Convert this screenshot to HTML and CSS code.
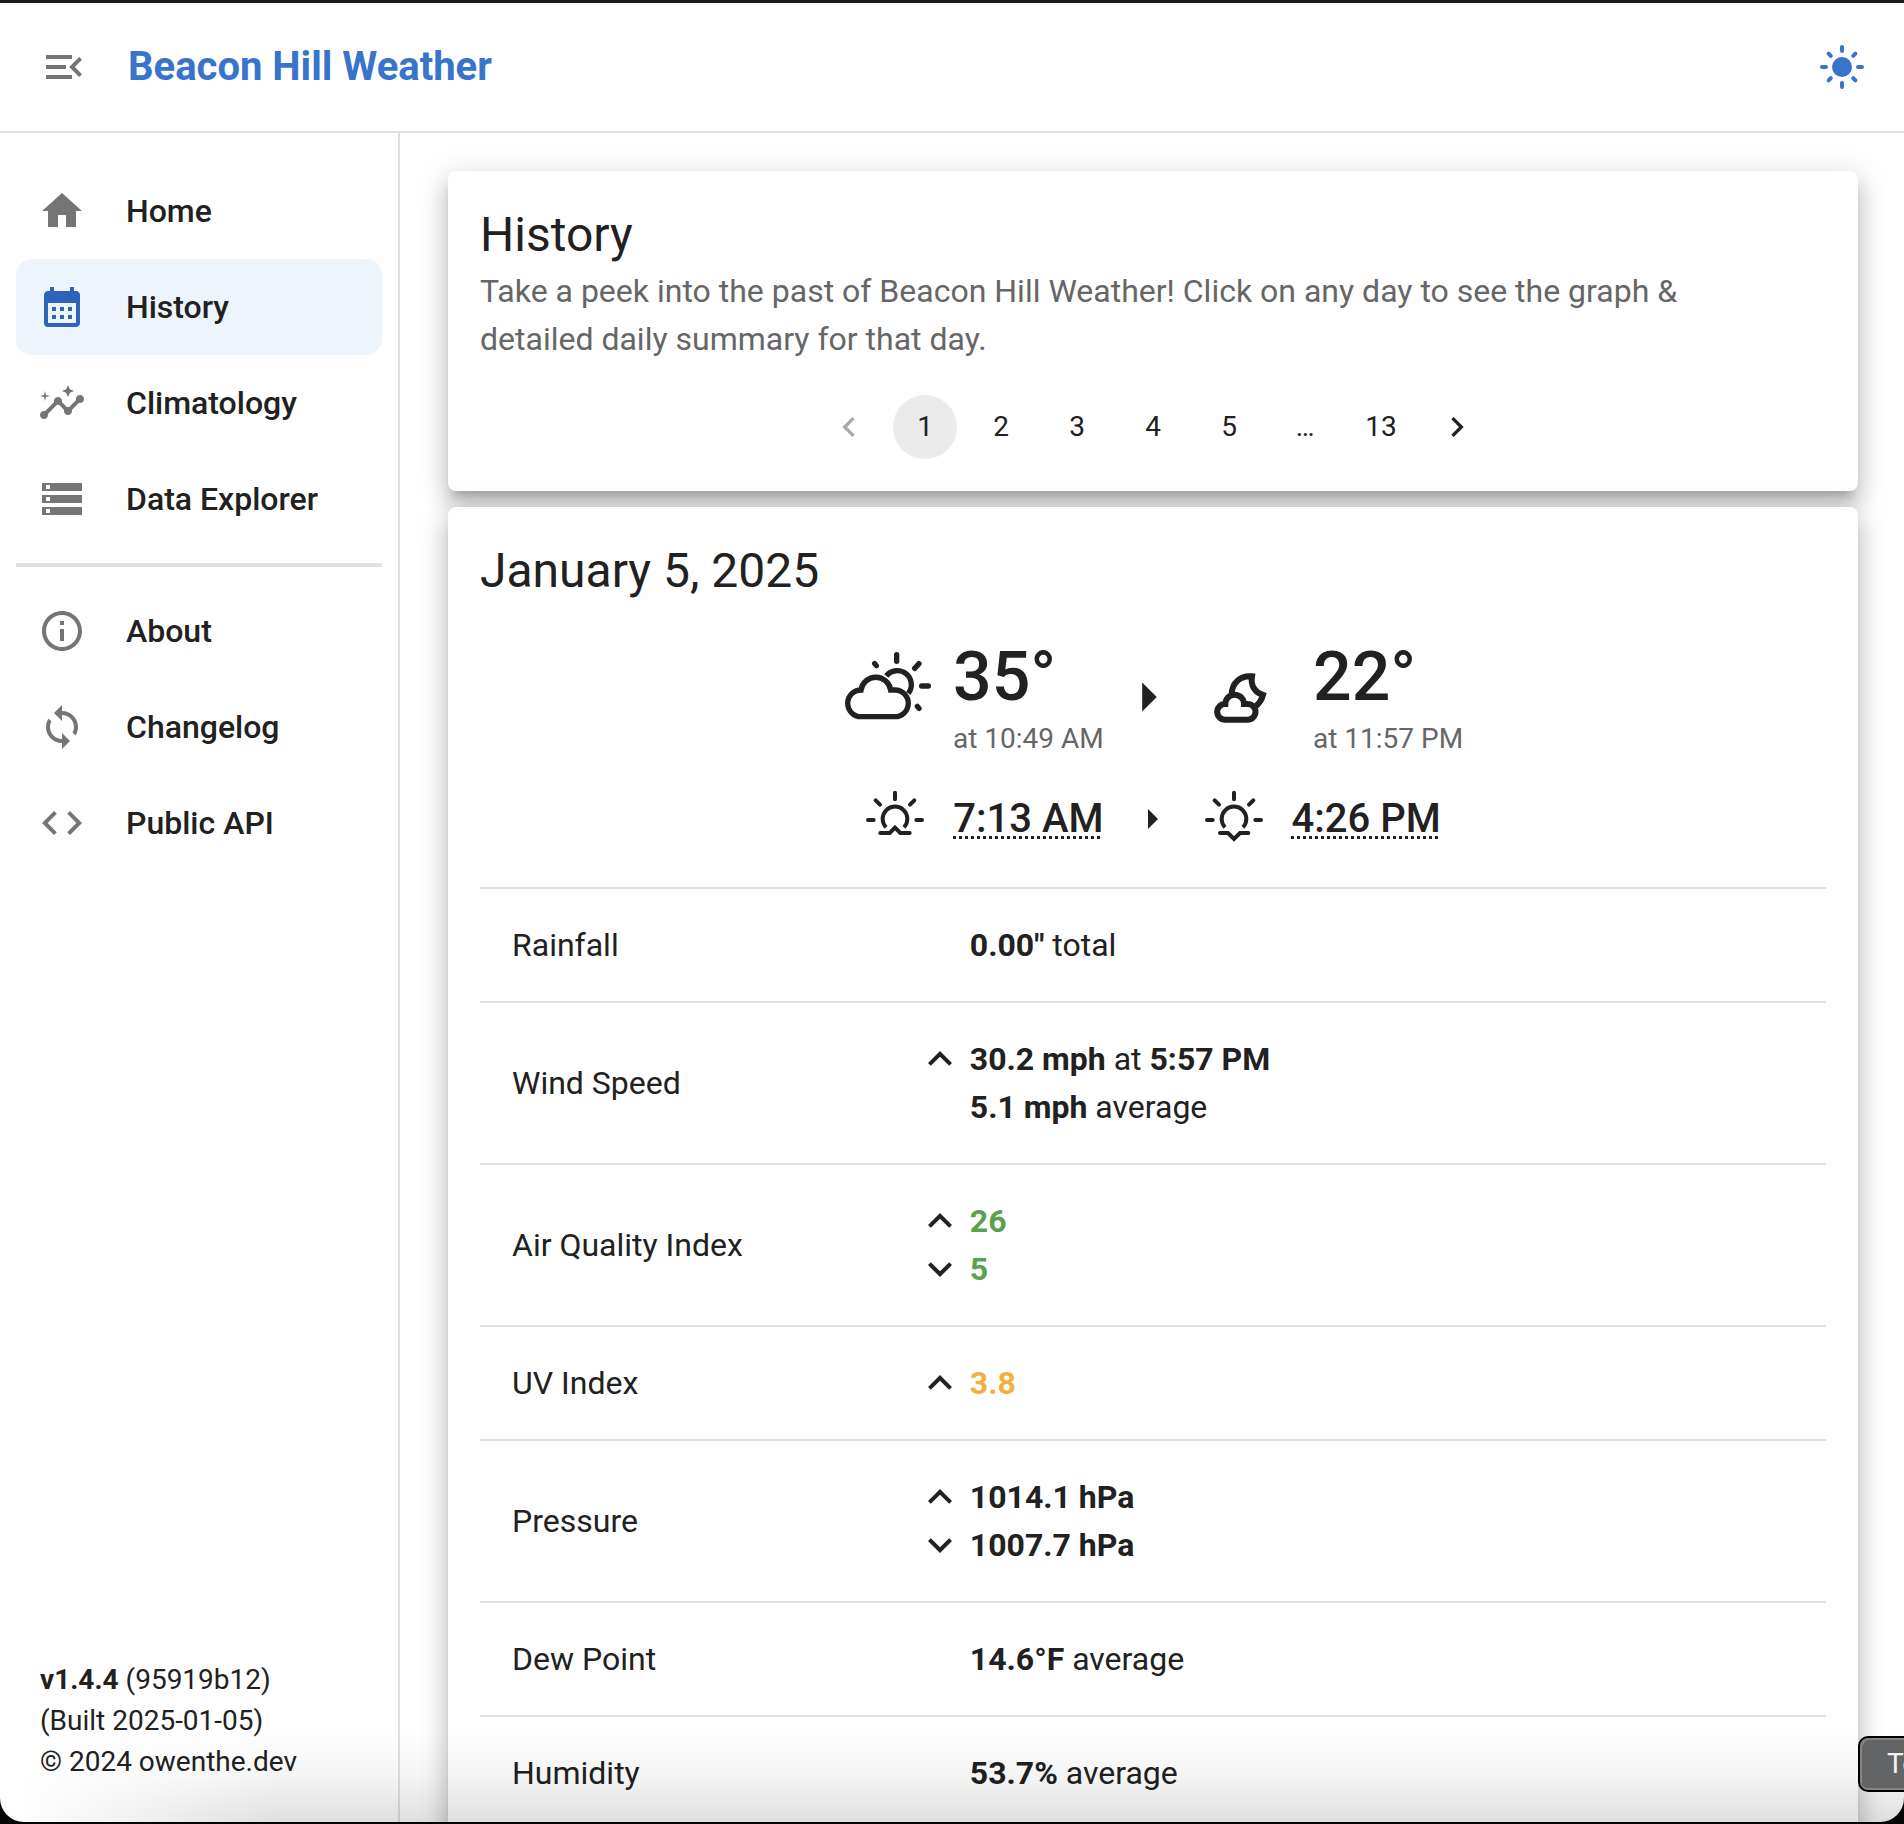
FILE: index.html
```html
<!DOCTYPE html>
<html lang="en">
<head>
    <meta charset="UTF-8">
    <meta name="viewport" content="width=device-width, initial-scale=1.0">
    <title>History - Beacon Hill Weather</title>
    <link rel="stylesheet" href="styles.css">
</head>
<body>
<div class="window">
    <header class="topbar">
        <button class="icon-button" type="button" aria-label="Close menu">
            <svg class="icon" viewBox="0 0 24 24"><path d="M3 18h13v-2H3v2zM3 13h10v-2H3v2zm0-7v2h13V6H3zm18 9.59L17.42 12 21 8.41 19.59 7l-5 5 5 5L21 15.59z"/></svg>
        </button>
        <a class="brand" href="#">Beacon Hill Weather</a>
        <button class="icon-button theme" type="button" aria-label="Light mode">
            <svg class="icon" viewBox="0 0 24 24"><circle cx="12" cy="12" r="5"/><path d="M12 2v2M12 20v2M2 12h2M20 12h2M5.3 5.3l1.1 1.1M17.6 17.6l1.1 1.1M18.7 5.3l-1.1 1.1M6.4 17.6l-1.1 1.1" stroke="currentColor" stroke-width="2" stroke-linecap="round"/></svg>
        </button>
    </header>

    <div class="layout">
        <aside class="sidebar">
            <nav class="menu">
                <a class="menu-item" href="#">
                    <svg class="icon" viewBox="0 0 24 24"><path d="M10 20v-6h4v6h5v-8h3L12 3 2 12h3v8z"/></svg>
                    Home
                </a>
                <a class="menu-item active" href="#">
                    <svg class="icon" viewBox="0 0 24 24"><path d="M19 4h-1V2h-2v2H8V2H6v2H5c-1.11 0-1.99.9-1.99 2L3 20a2 2 0 0 0 2 2h14c1.1 0 2-.9 2-2V6c0-1.1-.9-2-2-2zm0 16H5V10h14v10zM9 14H7v-2h2v2zm4 0h-2v-2h2v2zm4 0h-2v-2h2v2zm-8 4H7v-2h2v2zm4 0h-2v-2h2v2zm4 0h-2v-2h2v2z"/></svg>
                    History
                </a>
                <a class="menu-item" href="#">
                    <svg class="icon" viewBox="0 0 24 24"><path d="M21 8c-1.45 0-2.26 1.44-1.93 2.51l-3.55 3.56c-.3-.09-.74-.09-1.04 0l-2.55-2.55C12.27 10.45 11.46 9 10 9c-1.45 0-2.27 1.44-1.93 2.52l-4.56 4.55C2.44 15.74 1 16.55 1 18c0 1.1.9 2 2 2 1.45 0 2.26-1.44 1.93-2.51l4.55-4.56c.3.09.74.09 1.04 0l2.55 2.55C12.73 16.55 13.54 18 15 18c1.45 0 2.27-1.44 1.93-2.52l3.56-3.55c1.07.33 2.51-.48 2.51-1.93 0-1.1-.9-2-2-2z"/><path d="m15 9 .94-2.07L18 6l-2.06-.93L15 3l-.92 2.07L12 6l2.08.93zM3.5 11 4 9l2-.5L4 8l-.5-2L3 8l-2 .5L3 9z"/></svg>
                    Climatology
                </a>
                <a class="menu-item" href="#">
                    <svg class="icon" viewBox="0 0 24 24"><path d="M2 20h20v-4H2v4zm2-3h2v2H4v-2zM2 4v4h20V4H2zm4 3H4V5h2v2zm-4 7h20v-4H2v4zm2-3h2v2H4v-2z"/></svg>
                    Data Explorer
                </a>
                <hr class="divider">
                <a class="menu-item" href="#">
                    <svg class="icon" viewBox="0 0 24 24"><path d="M11 7h2v2h-2zm0 4h2v6h-2zm1-9C6.48 2 2 6.48 2 12s4.48 10 10 10 10-4.48 10-10S17.52 2 12 2zm0 18c-4.41 0-8-3.59-8-8s3.59-8 8-8 8 3.59 8 8-3.59 8-8 8z"/></svg>
                    About
                </a>
                <a class="menu-item" href="#">
                    <svg class="icon" viewBox="0 0 24 24"><path d="M12 4V1L8 5l4 4V6c3.31 0 6 2.69 6 6 0 1.01-.25 1.97-.7 2.8l1.46 1.46C19.54 15.03 20 13.57 20 12c0-4.42-3.58-8-8-8zm0 14c-3.31 0-6-2.69-6-6 0-1.01.25-1.97.7-2.8L5.24 7.74C4.46 8.97 4 10.43 4 12c0 4.42 3.58 8 8 8v3l4-4-4-4v3z"/></svg>
                    Changelog
                </a>
                <a class="menu-item" href="#">
                    <svg class="icon" viewBox="0 0 24 24"><path d="M9.4 16.6 4.8 12l4.6-4.6L8 6l-6 6 6 6 1.4-1.4zm5.2 0 4.6-4.6-4.6-4.6L16 6l6 6-6 6-1.4-1.4z"/></svg>
                    Public API
                </a>
            </nav>
            <div class="version">
                <b>v1.4.4</b> (95919b12)<br>
                (Built 2025-01-05)<br>
                © 2024 owenthe.dev
            </div>
        </aside>

        <main class="content">
            <section class="card">
                <h1 class="card-title">History</h1>
                <p class="card-text">Take a peek into the past of Beacon Hill Weather! Click on any day to see the graph &amp;<br>detailed daily summary for that day.</p>
                <nav class="pagination" aria-label="Pages">
                    <button class="page" type="button" aria-label="Previous page" disabled>
                        <svg class="page-icon" viewBox="0 0 24 24"><path d="M15.41 7.41 14 6l-6 6 6 6 1.41-1.41L10.83 12z"/></svg>
                    </button>
                    <button class="page current" type="button" aria-current="page">1</button>
                    <button class="page" type="button">2</button>
                    <button class="page" type="button">3</button>
                    <button class="page" type="button">4</button>
                    <button class="page" type="button">5</button>
                    <span class="page">…</span>
                    <button class="page" type="button">13</button>
                    <button class="page" type="button" aria-label="Next page">
                        <svg class="page-icon" viewBox="0 0 24 24"><path d="M10 6 8.59 7.41 13.17 12l-4.58 4.59L10 18l6-6z"/></svg>
                    </button>
                </nav>
            </section>

            <section class="card">
                <h2 class="card-title">January 5, 2025</h2>
                <div class="temps">
                    <!-- partly cloudy, day -->
                    <svg class="weather-icon" viewBox="24 21 330 300">
                        <g stroke-width="16">
                            <path d="M78 150A45 45 0 0 1 167 150H180a40 40 0 0 1 0 80H78a40 40 0 0 1 0-80z"/>
                            <path d="M154 108A42 42 0 0 1 220 160"/>
                            <path stroke-linecap="round" d="M185 44v20M252 71l-13 14M260 138h20M119 71l5 6M247 199l5 6"/>
                        </g>
                    </svg>
                    <div class="reading">
                        <div class="degrees">35°</div>
                        <div class="when">at 10:49 AM</div>
                    </div>
                    <svg class="arrow-big" viewBox="0 0 24 24"><path d="m10 17 5-5-5-5v10z"/></svg>
                    <!-- partly cloudy, night -->
                    <svg class="weather-icon" viewBox="24 -39 330 300">
                        <g stroke-width="18">
                            <path d="M91 132A28 28 0 0 1 147 132H158a23 23 0 0 1 0 47H90a23 23 0 0 1 0-47z"/>
                            <path d="M110 104C110 68 138 45 171 49C166 76 180 98 204 105C200 120 192 132 180 140"/>
                        </g>
                    </svg>
                    <div class="reading">
                        <div class="degrees">22°</div>
                        <div class="when">at 11:57 PM</div>
                    </div>
                </div>
                <div class="sun">
                    <!-- sunrise -->
                    <svg class="sun-icon" viewBox="24 27 180 180">
                        <path d="M87 142A37 37 0 1 1 141 142"/>
                        <path stroke-linecap="round" d="M70 159H98L114 143L130 159H158M114 38v20M56 61l13 13M172 61l-13 13M33 120h17M178 120h17"/>
                    </svg>
                    <span class="sun-time">7:13 AM</span>
                    <svg class="arrow-small" viewBox="0 0 24 24"><path d="m10 17 5-5-5-5v10z"/></svg>
                    <!-- sunset -->
                    <svg class="sun-icon" viewBox="24 27 180 180">
                        <path d="M87 142A37 37 0 1 1 141 142"/>
                        <path stroke-linecap="round" d="M72 159H96L114 177L132 159H157M114 38v20M56 61l13 13M172 61l-13 13M33 120h17M178 120h17"/>
                    </svg>
                    <span class="sun-time">4:26 PM</span>
                </div>

                <table class="stats">
                    <tr>
                        <th scope="row">Rainfall</th>
                        <td>
                            <div class="line"><span class="mark"></span><span><b>0.00"</b> total</span></div>
                        </td>
                    </tr>
                    <tr>
                        <th scope="row">Wind Speed</th>
                        <td>
                            <div class="line"><svg class="mark" viewBox="0 0 24 24"><path d="m12 8-6 6 1.41 1.41L12 10.83l4.59 4.58L18 14z"/></svg><span><b>30.2 mph</b> at <b>5:57 PM</b></span></div>
                            <div class="line"><span class="mark"></span><span><b>5.1 mph</b> average</span></div>
                        </td>
                    </tr>
                    <tr>
                        <th scope="row">Air Quality Index</th>
                        <td>
                            <div class="line"><svg class="mark" viewBox="0 0 24 24"><path d="m12 8-6 6 1.41 1.41L12 10.83l4.59 4.58L18 14z"/></svg><b class="good">26</b></div>
                            <div class="line"><svg class="mark" viewBox="0 0 24 24"><path d="M16.59 8.59 12 13.17 7.41 8.59 6 10l6 6 6-6z"/></svg><b class="good">5</b></div>
                        </td>
                    </tr>
                    <tr>
                        <th scope="row">UV Index</th>
                        <td>
                            <div class="line"><svg class="mark" viewBox="0 0 24 24"><path d="m12 8-6 6 1.41 1.41L12 10.83l4.59 4.58L18 14z"/></svg><b class="moderate">3.8</b></div>
                        </td>
                    </tr>
                    <tr>
                        <th scope="row">Pressure</th>
                        <td>
                            <div class="line"><svg class="mark" viewBox="0 0 24 24"><path d="m12 8-6 6 1.41 1.41L12 10.83l4.59 4.58L18 14z"/></svg><b>1014.1 hPa</b></div>
                            <div class="line"><svg class="mark" viewBox="0 0 24 24"><path d="M16.59 8.59 12 13.17 7.41 8.59 6 10l6 6 6-6z"/></svg><b>1007.7 hPa</b></div>
                        </td>
                    </tr>
                    <tr>
                        <th scope="row">Dew Point</th>
                        <td>
                            <div class="line"><span class="mark"></span><span><b>14.6°F</b> average</span></div>
                        </td>
                    </tr>
                    <tr>
                        <th scope="row">Humidity</th>
                        <td>
                            <div class="line"><span class="mark"></span><span><b>53.7%</b> average</span></div>
                        </td>
                    </tr>
                </table>
            </section>
        </main>
    </div>
    <div class="fade"></div>
</div>
<div class="hint">To</div>
</body>
</html>
```
FILE: styles.css
```css
* {
    box-sizing: border-box;
}
body {
    margin: 0;
    height: 100vh;
    overflow: hidden;
    background: #050505;
    color: #212121;
    font-family: Roboto, "Liberation Sans", sans-serif;
    font-size: 32px;
    line-height: 48px;
}
button {
    padding: 0;
    border: 0;
    background: none;
    color: inherit;
    font: inherit;
}
a {
    color: inherit;
    text-decoration: none;
}
svg {
    display: block;
    flex: none;
    fill: currentColor;
}

/* window frame */
.window {
    position: relative;
    display: flex;
    flex-direction: column;
    height: calc(100vh - 2px);
    border-top: 3px solid #1c1b20;
    border-radius: 0 0 24px 24px;
    background: #fefefe;
    overflow: hidden;
}
.fade {
    position: absolute;
    left: 0;
    right: 0;
    bottom: 0;
    height: 90px;
    background: linear-gradient(to top, rgba(0,0,0,.12), rgba(0,0,0,.04) 50%, transparent);
    -webkit-mask-image: linear-gradient(to right, transparent 20px, #000 280px);
    mask-image: linear-gradient(to right, transparent 20px, #000 280px);
    pointer-events: none;
}

/* top bar */
.topbar {
    display: flex;
    flex: none;
    align-items: center;
    gap: 40px;
    height: 130px;
    padding: 0 38px 0 40px;
    border-bottom: 2px solid #e0e0e0;
}
.icon {
    width: 48px;
    height: 48px;
}
.icon-button {
    color: #757575;
}
.brand {
    color: #3874cb;
    font-size: 40px;
    font-weight: 700;
}
.theme {
    margin-left: auto;
    color: #3874cb;
}

/* sidebar */
.layout {
    display: flex;
    flex: 1;
    min-height: 0;
}
.sidebar {
    display: flex;
    flex: none;
    flex-direction: column;
    justify-content: space-between;
    width: 400px;
    padding: 30px 16px 40px;
    border-right: 2px solid #e0e0e0;
}
.menu-item {
    display: flex;
    align-items: center;
    gap: 40px;
    height: 96px;
    padding: 0 22px;
    border-radius: 16px;
    font-weight: 500;
}
.menu-item .icon {
    color: #757575;
}
.menu-item.active {
    background: #edf4fc;
}
.menu-item.active .icon {
    color: #2e63bb;
}
.divider {
    height: 4px;
    margin: 16px 0;
    border: 0;
    background: #e0e0e0;
}
.version {
    padding: 0 24px;
    font-size: 28px;
    line-height: 41px;
}

/* cards */
.content {
    flex: 1;
    min-width: 0;
    padding: 38px 46px 0 48px;
    overflow: hidden;
}
.card {
    margin-bottom: 16px;
    padding: 32px;
    border-radius: 8px;
    background: #fefefe;
    box-shadow: 0 10px 10px -6px rgba(0,0,0,.2), 0 16px 20px 2px rgba(0,0,0,.14), 0 6px 28px 4px rgba(0,0,0,.12);
}
.card-title {
    margin: 0;
    font-size: 48px;
    font-weight: 400;
    line-height: 64px;
}
.card-text {
    margin: 0;
    color: #666;
}
.pagination {
    display: flex;
    justify-content: center;
    gap: 12px;
    margin-top: 32px;
}
.page {
    display: flex;
    align-items: center;
    justify-content: center;
    width: 64px;
    height: 64px;
    border-radius: 32px;
    font-size: 28px;
}
.page:disabled {
    opacity: .38;
}
.page.current {
    background: #ebebeb;
}
.page-icon {
    width: 40px;
    height: 40px;
}

/* high and low of the day */
.temps, .sun {
    display: flex;
    align-items: center;
    justify-content: center;
}
.temps {
    margin-top: 32px;
}
.weather-icon {
    width: 110px;
    height: 100px;
}
.weather-icon, .sun-icon {
    fill: none;
    stroke: currentColor;
}
.reading {
    width: 150px;
}
.degrees {
    font-size: 68px;
    font-weight: 500;
    line-height: 84px;
}
.when {
    color: #666;
    font-size: 28px;
    line-height: 40px;
    white-space: nowrap;
}
.arrow-big {
    width: 70px;
    height: 70px;
    margin: 0 20px 0 10px;
}
.sun {
    margin-top: 28px;
}
.sun-icon {
    width: 60px;
    height: 60px;
    margin-right: 28px;
    stroke-width: 12px;
}
.sun-time {
    font-size: 40px;
    font-weight: 500;
    line-height: 64px;
    text-decoration: underline dotted 3px;
    text-underline-offset: 4px;
}
.arrow-small {
    width: 48px;
    height: 48px;
    margin: 0 28px 0 24px;
}

/* daily summary */
.stats {
    width: 100%;
    margin-top: 36px;
    border-collapse: collapse;
}
.stats th, .stats td {
    padding: 32px;
    border-top: 2px solid #e0e0e0;
    font-weight: 400;
    text-align: left;
}
.stats th {
    width: 30%;
}
.line {
    display: flex;
    gap: 6px;
}
.mark {
    flex: none;
    width: 48px;
    height: 48px;
}
.good {
    color: #5b9f51;
}
.moderate {
    color: #f2b13c;
}

/* clipped hint at the screen edge */
.hint {
    position: absolute;
    right: 0;
    bottom: 32px;
    width: 46px;
    height: 56px;
    padding-left: 27px;
    border: solid #000;
    border-width: 2px 0 2px 2px;
    border-radius: 10px 0 0 10px;
    background: #636466;
    box-shadow: inset 2px 2px #858585, inset 0 -2px #858585;
    color: #f4f4f4;
    font-size: 28px;
    line-height: 52px;
    overflow: hidden;
}
```
